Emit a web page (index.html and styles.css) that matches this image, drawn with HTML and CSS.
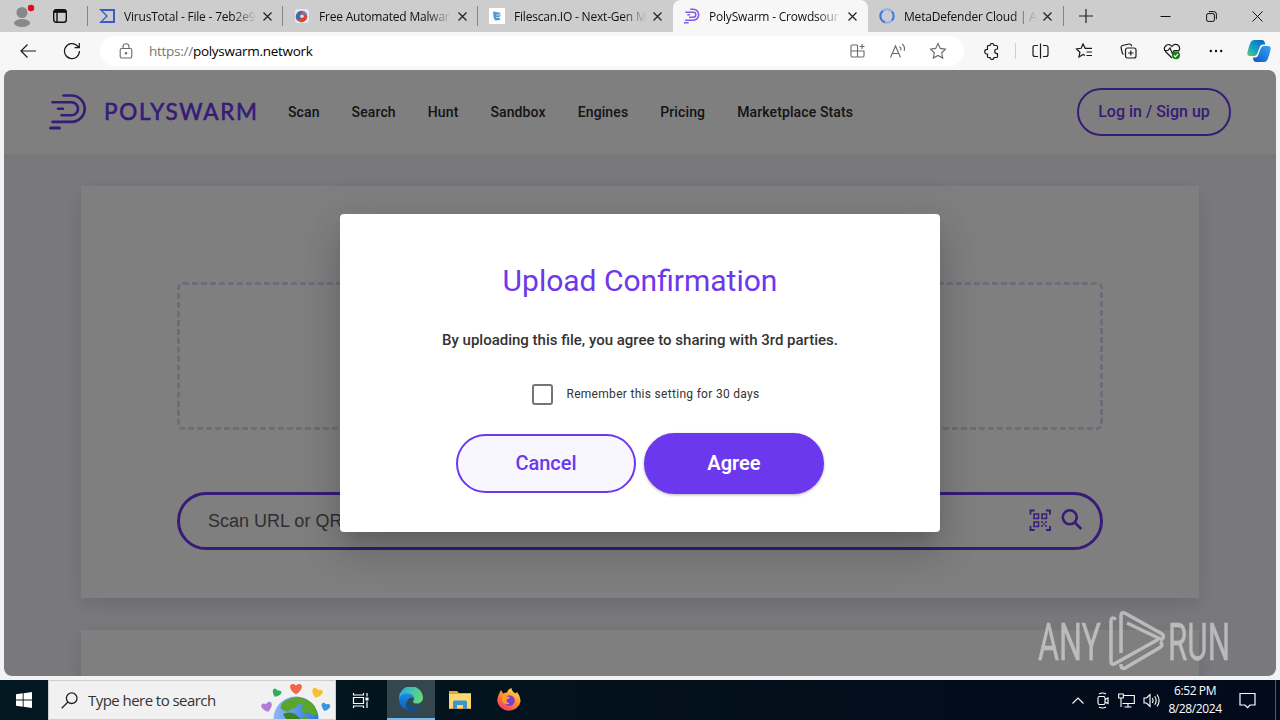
FILE: index.html
```html
<!DOCTYPE html>
<html lang="en">
<head>
    <meta charset="UTF-8">
    <meta name="viewport" content="width=device-width, initial-scale=1.0">
    <title>PolySwarm - Crowdsourced threat detection</title>
    <link rel="stylesheet" href="styles.css">
</head>
<body>

    <!-- Browser tabs -->
    <div class="tab-strip">
        <div class="strip-left">
            <svg width="24" height="24" viewBox="0 0 24 24">
                <circle cx="11" cy="8.500" r="5.500" fill="#888"/>
                <ellipse cx="11" cy="19" rx="8" ry="4" fill="#888"/>
                <circle cx="20" cy="4" r="3.200" fill="#e00b1c"/>
            </svg>
            <svg width="16" height="16" viewBox="0 0 16 16" fill="none" stroke="#111" stroke-width="1.400">
                <rect x="1.700" y="1.700" width="12.600" height="12.600" rx="2.500"/>
                <path d="M1.700 4h12.600M5 4v10" />
                <path d="M2 3h12" stroke-width="2.500"/>
            </svg>
        </div>
        <div class="tab">
            <svg width="16" height="16" viewBox="0 0 16 16"><path d="M0 1h16v14H0l7-7zM3.800 3L9 8l-5.200 5H14V3z" fill="#3b5bc8" fill-rule="evenodd"/></svg>
            <span class="tab-title">VirusTotal - File - 7eb2e9</span>
            <svg class="close" width="9" height="9" viewBox="0 0 9 9"><path d="M.5.5l8 8M8.500.5l-8 8"/></svg>
        </div>
        <div class="tab">
            <svg width="16" height="16" viewBox="0 0 16 16"><rect x="1" y="1" width="14" height="14" rx="3" fill="#dfe9ef"/><circle cx="7.500" cy="8.500" r="5.700" fill="#d9433a"/><path d="M8 3a5.700 5.700 0 0 0-5 9C5 13 5.500 8 8 3z" fill="#2d76b5"/><path d="M8 2.800a5.700 5.700 0 0 1 5 4L9 6z" fill="#3f9ad6"/><circle cx="8" cy="8.300" r="1.800" fill="#cfe3f5"/></svg>
            <span class="tab-title">Free Automated Malwar</span>
            <svg class="close" width="9" height="9" viewBox="0 0 9 9"><path d="M.5.5l8 8M8.500.5l-8 8"/></svg>
        </div>
        <div class="tab">
            <svg width="16" height="16" viewBox="0 0 16 16"><path d="M0 0h16v16H0z" fill="#fff"/><path d="M4 3.500l8 1.500-2 1.500 2 1-2 1.500 1.500 3L6 12.500 4.500 9z" fill="#4a9ad4"/><path d="M7 7h4M7 9.500h3" stroke="#b9dcf2"/></svg>
            <span class="tab-title">Filescan.IO - Next-Gen M</span>
            <svg class="close" width="9" height="9" viewBox="0 0 9 9"><path d="M.5.5l8 8M8.500.5l-8 8"/></svg>
        </div>
        <div class="tab active">
            <svg width="16" height="16" viewBox="0 0 38 36" fill="none" stroke="#8457e6" stroke-width="3.600"><path d="M15 2h7a13 13 0 0 1 0 26H3M3 9h19a6 6 0 0 1 0 12H12M8 15h6M0 34h11"/></svg>
            <span class="tab-title">PolySwarm - Crowdsour</span>
            <svg class="close" width="9" height="9" viewBox="0 0 9 9"><path d="M.5.5l8 8M8.500.5l-8 8"/></svg>
        </div>
        <div class="tab">
            <svg width="16" height="16" viewBox="0 0 16 16" fill="none" stroke-width="2"><circle cx="8" cy="8" r="6.700" stroke="#8fb0ea"/><path d="M4 2.700A6.700 6.700 0 0 0 6 14.400M13 3.700a6.700 6.700 0 0 1 0 8.600" stroke="#3f78dc"/></svg>
            <span class="tab-title">MetaDefender Cloud | A</span>
            <svg class="close" width="9" height="9" viewBox="0 0 9 9"><path d="M.5.5l8 8M8.500.5l-8 8"/></svg>
        </div>
        <div class="new-tab">
            <svg width="14" height="14" viewBox="0 0 14 14" stroke="#222" stroke-width="1.200"><path d="M7 0v14M0 7h14"/></svg>
        </div>
        <div class="window-controls">
            <span><svg width="11" height="11" viewBox="0 0 11 11"><path d="M.5 5.500h10"/></svg></span>
            <span><svg width="11" height="11" viewBox="0 0 11 11"><rect x=".6" y="2.600" width="7.800" height="7.800" rx="1.500"/><path d="M2.800.6h5a2.600 2.600 0 0 1 2.600 2.600v5"/></svg></span>
            <span><svg width="11" height="11" viewBox="0 0 11 11"><path d="M.5.5l10 10M10.500.5l-10 10"/></svg></span>
        </div>
    </div>

    <!-- Toolbar -->
    <div class="toolbar">
        <span class="tool"><svg width="18" height="16" viewBox="0 0 18 16"><path d="M17 8H2M8.500 1.500L2 8l6.500 6.500"/></svg></span>
        <span class="tool"><svg width="18" height="18" viewBox="0 0 18 18"><path d="M16.500 9A7.500 7.500 0 1 1 14 3.500L16 5.500M16.300 1v4.700h-4.700"/></svg></span>
        <div class="address-bar">
            <svg width="14" height="16" viewBox="0 0 14 16"><rect x="1.200" y="5.500" width="11.600" height="9.500" rx="1.500"/><path d="M4 5.500V3.800a3 3 0 0 1 6 0v1.700"/><circle cx="7" cy="10.200" r=".7" fill="#555"/></svg>
            <span class="url"><span class="scheme">https://</span>polyswarm.network</span>
            <span class="address-icon"><svg width="16" height="16" viewBox="0 0 16 16"><path d="M7.500 2H2.200Q1 2 1 3.200v9.600Q1 14 2.200 14h10.600q1.200 0 1.200-1.200V8H1M7.500 2v12M12 1v5M9.500 3.500h5"/></svg></span>
            <span class="address-icon"><svg width="18" height="16" viewBox="0 0 18 16"><path d="M1.500 14.500L6.500 3l5 11.500M3.200 10.500h6.600M10.500 3.500q2 1.500 1.300 3.800M13.200 1q3.200 2.500 2 6.800"/></svg></span>
            <span class="address-icon"><svg width="18" height="18" viewBox="0 0 18 18"><path d="M9 1.500l2.300 4.900 5.200.7-3.800 3.700 1 5.300L9 13.500l-4.700 2.600 1-5.300L1.500 7.100l5.200-.7z"/></svg></span>
        </div>
        <span class="tool"><svg width="17" height="17" viewBox="0 0 17 17"><path d="M5.500 2.500H7a2 2 0 0 1 4 0h2.500q1 0 1 1V6H14a2.300 2.300 0 0 0 0 4.600h.5v2.900q0 1-1 1H11a2 2 0 0 1-4 0H5.500q-1 0-1-1V11H4a2.300 2.300 0 0 1 0-4.600h.5V3.500q0-1 1-1z"/></svg></span>
        <span class="tool-divider"></span>
        <span class="tool"><svg width="17" height="16" viewBox="0 0 17 16"><path d="M6 2.500H3Q1 2.500 1 4.500v7q0 2 2 2h3M11 2.500h3q2 0 2 2v7q0 2-2 2h-3M8.500.5v15"/></svg></span>
        <span class="tool"><svg width="18" height="16" viewBox="0 0 18 16"><path d="M10 12.500l-2-1L4 14l.9-4.800L1.500 6l4.700-.7L8 1l2.200 4.300H17M11.500 9H17M11.500 12.500H17"/></svg></span>
        <span class="tool"><svg width="17" height="16" viewBox="0 0 17 16"><rect x="5.500" y="5" width="10.500" height="10" rx="2"/><path d="M10.800 7.500v5M8.200 10h5.200M3.500 11.500Q2.500 11 2 9L1 4.500Q1 3 2.500 2.500L9 1q2-.2 2.500 1.500l.2.700"/></svg></span>
        <span class="tool"><svg width="18" height="17" viewBox="0 0 18 17"><path d="M9 15L2.500 8.500C-1 4 5.500-1.500 9 3.500c3.500-5 10-.5 6.500 5M1 7.500h4L7 5l2.500 6L11 7.500h5"/><circle cx="13" cy="12.300" r="4" fill="#14801c" stroke="none"/><path d="M11 12.400l1.400 1.400 2.600-2.900" stroke="#fff"/></svg></span>
        <span class="tool"><svg width="14" height="4" viewBox="0 0 14 4"><g fill="#111" stroke="none"><circle cx="1.800" cy="2" r="1.200"/><circle cx="7" cy="2" r="1.200"/><circle cx="12.200" cy="2" r="1.200"/></g></svg></span>
        <span class="tool copilot">
            <svg width="24" height="22" viewBox="0 0 24 22">
                <defs>
                    <linearGradient id="cp1" x1="0" y1="1" x2="1" y2="0"><stop offset="0" stop-color="#63c96b"/><stop offset=".4" stop-color="#12a5c8"/><stop offset="1" stop-color="#0a5fc0"/></linearGradient>
                    <linearGradient id="cp2" x1="0" y1="1" x2="1" y2="0"><stop offset="0" stop-color="#0d57c7"/><stop offset="1" stop-color="#38a3f2"/></linearGradient>
                </defs>
                <path d="M7 0h8q2 0 2.600 2l.6 2.500h-2.700q-2 0-2.800 2.500L10.500 13Q9.500 16 7 16H3q-3 0-2.700-3Q1.500 7 3.500 2.500 4.500 0 7 0z" fill="url(#cp1)"/>
                <path d="M17 22H9q-2 0-2.600-2l-.6-2.500h2.700q2 0 2.800-2.500l2.200-6Q14.500 6 17 6h4q3 0 2.700 3-1.200 6-3.200 10.500-1 2.500-3.500 2.500z" fill="url(#cp2)"/>
            </svg>
        </span>
    </div>

    <!-- Page -->
    <div class="viewport">
        <header>
            <svg class="logo" width="208" height="36" viewBox="0 0 208 36">
                <path d="M14.500 1.500H22.500a13.200 13.200 0 0 1 0 26.400H3.500M3.500 8.200h19a6.500 6.500 0 0 1 0 13H12.500M9 14.700h5" fill="none" stroke="#6c38ed" stroke-width="2.600" stroke-linecap="round"/>
                <path d="M1.500 34h9" stroke="#6c38ed" stroke-width="3" stroke-linecap="round"/>
                <text x="55" y="26" textLength="153">POLYSWARM</text>
            </svg>
            <nav>
                <a>Scan</a>
                <a>Search</a>
                <a>Hunt</a>
                <a>Sandbox</a>
                <a>Engines</a>
                <a>Pricing</a>
                <a>Marketplace Stats</a>
            </nav>
            <button class="login">Log in / Sign up</button>
        </header>
        <main>
            <section class="card">
                <div class="dropzone"></div>
                <div class="search-box">
                    <span>Scan URL or QR Code</span>
                    <svg width="22" height="22" viewBox="0 0 22 22" fill="none" stroke="#6c38ed" stroke-width="1.500">
                        <path d="M1.500 5.500v-4h4M17 1.500h4v4M1.500 17v4h4M17 21h4v-4" stroke-width="1.800"/>
                        <path d="M5 5h4.500v4.500H5zM13 5h4.500v4.500H13zM5 13h4.500v4.500H5z"/>
                        <path d="M12 13h2M16 13h2M14 15h2M12 17h2M16 17h2"/>
                    </svg>
                    <svg width="22" height="22" viewBox="0 0 22 22" fill="none" stroke="#6c38ed" stroke-width="2.600"><circle cx="8.800" cy="8.300" r="7"/><path d="M13.800 13.500l6.500 6.500"/></svg>
                </div>
            </section>
            <section class="card"></section>
        </main>

        <div class="overlay">
            <div class="modal">
                <h1>Upload Confirmation</h1>
                <p>By uploading this file, you agree to sharing with 3rd parties.</p>
                <label><span class="checkbox"></span>Remember this setting for 30 days</label>
                <div class="actions">
                    <button class="cancel">Cancel</button>
                    <button class="agree">Agree</button>
                </div>
            </div>
        </div>

        <svg class="watermark" width="194" height="62" viewBox="0 0 194 62">
            <text x="1" y="49.500" textLength="63" lengthAdjust="spacingAndGlyphs">ANY</text>
            <text x="131" y="49.500" textLength="62" lengthAdjust="spacingAndGlyphs">RUN</text>
            <path d="M79 9.500q-5-4-5 2v40q0 4 4 2l43-24M84 43V6q0-5 4.500-2.500l36 20q4 3 0 6L90 13M84 54v2q1 4 5 1.500l34-20q4-3 0-5.500"/>
        </svg>
    </div>

    <!-- Windows taskbar -->
    <div class="taskbar">
        <span class="start"><svg width="16" height="16" viewBox="0 0 16 16" fill="#fff"><path d="M0 2.300l6.700-1v6.200H0zM7.600 1.200L16 0v7.500H7.600zM0 8.500h6.700v6.200l-6.700-1zM7.600 8.500H16V16l-8.400-1.200z"/></svg></span>
        <div class="taskbar-search">
            <svg width="17" height="17" viewBox="0 0 17 17" fill="none" stroke="#222" stroke-width="1.300"><circle cx="10.700" cy="6.200" r="5.300"/><path d="M7 10L.7 16.300"/></svg>
            <span>Type here to search</span>
            <svg class="earth" width="70" height="38" viewBox="0 0 70 38">
                <defs>
                    <linearGradient id="sea"><stop offset="0" stop-color="#8fb8f5"/><stop offset="1" stop-color="#2a78dc"/></linearGradient>
                    <path id="heart" d="M0 5.500C-10-1-5.500-8 0-3.500 5.500-8 10-1 0 5.500z"/>
                </defs>
                <circle cx="35" cy="38" r="22.500" fill="url(#sea)"/>
                <path d="M24 20q10-6 20-2 8 3 11 10l1 6-5 1-3-4-5 2-3-5 3-4-6-1-2 4-5 1q-2 4-6 2l-4-2q-1-5 4-8z" fill="#5aa52c"/>
                <path d="M22 33q7-3 12 0l6 5H25z" fill="#3b8420"/>
                <path d="M41 38l2-3 5 3z" fill="#5aa52c"/>
                <use href="#heart" x="35" y="8" fill="#f2674a"/>
                <use href="#heart" transform="translate(15.500 12) rotate(25) scale(.75)" fill="#2fae62"/>
                <use href="#heart" transform="translate(56 12) rotate(20) scale(.9)" fill="#f8bf35"/>
                <use href="#heart" transform="translate(6 26) rotate(-15) scale(.9)" fill="#b07ed6"/>
                <use href="#heart" transform="translate(64.500 26) rotate(15) scale(.75)" fill="#3a94de"/>
            </svg>
        </div>
        <span class="app taskview"><svg width="18" height="17" viewBox="0 0 18 17" fill="none" stroke="#fff" stroke-width="1.200"><path d="M1.500 1v2h10V1M1.500 16v-2h10v2M1.500 5.500h10v6h-10zM15 1v3.500M15 9.500V16"/><path d="M13.500 5.500h3v3h-3z" fill="#fff" stroke="none"/></svg></span>
        <span class="app open">
            <svg width="24" height="24" viewBox="0 0 24 24">
                <defs>
                    <linearGradient id="edge1" x1="0" y1=".3" x2="1" y2=".5"><stop offset="0" stop-color="#2ba7e4"/><stop offset="1" stop-color="#62db75"/></linearGradient>
                    <linearGradient id="edge2" x1="0" y1="0" x2="0" y2="1"><stop offset="0" stop-color="#1b8ee0"/><stop offset="1" stop-color="#0d5bb5"/></linearGradient>
                </defs>
                <path d="M0 12a12 12 0 0 1 24-1.500c0 4-3 6-6 6-4 0-4.500-1.600-3.500-3 1.500-3-1-6-5-6-4 0-8 2-9.500 4.500z" fill="url(#edge1)"/>
                <path d="M0 12c1-4 5-5.500 8.500-5.500 4 0 6.500 3 6.500 5-3-2-7 0-6.500 4 .5 5 7 6.500 13 3.500A12 12 0 0 1 0 12z" fill="url(#edge2)"/>
                <path d="M9 13c-2 5 3 9 12.500 6C19 23 15 24 12 24 7 22.500 5 17 9 13z" fill="#124d90"/>
            </svg>
        </span>
        <span class="app"><svg width="22" height="20" viewBox="0 0 22 20"><path d="M0 1h8l2 2h12v16H0z" fill="#e9a721"/><path d="M0 4h22v14H0z" fill="#fcd872"/><path d="M4 12q0-1.500 1.500-1.500h11Q18 10.500 18 12v7h-4v-4H8v4H4z" fill="#3f94cf"/></svg></span>
        <span class="app">
            <svg width="24" height="24" viewBox="0 0 24 24">
                <defs><linearGradient id="fox" x1=".8" y1="0" x2=".2" y2="1"><stop offset="0" stop-color="#ffe14a"/><stop offset=".5" stop-color="#ff8a2a"/><stop offset="1" stop-color="#f0306e"/></linearGradient></defs>
                <path d="M2 6l2-4 2 3.500q2-1 4-1Q11 1 14.500 0q0 3 4 5.500L20 4q4 5 3.500 9.500a11.700 10.500 0 0 1-23.300-1Q.3 9 2 6z" fill="url(#fox)"/>
                <circle cx="12.500" cy="12.500" r="5.200" fill="#7a3fd0"/>
                <path d="M5 7q3-1 5 1.500l3 .5q-1 2-3.500 2.500Q9 15 13 15.500q-6 2-8-3z" fill="#ff9a2e"/>
            </svg>
        </span>
        <div class="tray">
            <svg class="chevron" width="12" height="7" viewBox="0 0 12 7"><path d="M.5 6.500L6 1l5.500 5.500"/></svg>
            <svg width="14" height="17" viewBox="0 0 14 17"><rect x="2" y="4.500" width="7" height="8" rx="1.500"/><path d="M9 7.500l3-1.500v5.500L9 10M3 2q3.500-2 7 0M3 15q3.500 2 7 0"/></svg>
            <svg width="17" height="15" viewBox="0 0 17 15"><path d="M5.500 2.500h10.800v8H4.500M10 10.500v3.500M6.500 14h7M.7 1h4.600v4H.7zM3 5v9"/></svg>
            <svg width="17" height="15" viewBox="0 0 17 15"><path d="M1 5h2.500L7 1.500v12L3.500 10H1zM9.300 5q1.500 2.500 0 5M11.700 3.300q3 4.200 0 8.400M14 1.500q4.200 6 0 12"/></svg>
        </div>
        <div class="clock">
            <span>6:52 PM</span>
            <span>8/28/2024</span>
        </div>
        <span class="notifications"><svg width="17" height="17" viewBox="0 0 17 17" fill="none" stroke="#fff" stroke-width="1.200"><path d="M1 1.500h15v11.500h-5L8.500 15.700 6 13H1z"/></svg></span>
    </div>

</body>
</html>
```

FILE: styles.css
```css
* {
    box-sizing: border-box;
}

body {
    margin: 0;
    width: 1280px;
    height: 720px;
    overflow: hidden;
    display: flex;
    flex-direction: column;
    font-family: Roboto, sans-serif;
    background-color: #f3f3f4;
}

svg {
    flex-shrink: 0;
}

/* Browser tabs */
.tab-strip {
    display: flex;
    height: 32px;
    background-color: #cdcdcd;
    font-family: "Open Sans", sans-serif;
    font-size: 12px;
    color: #111;
}

.strip-left {
    width: 88px;
    display: flex;
    align-items: center;
    gap: 17px;
    padding-left: 11px;
}

.tab {
    position: relative;
    width: 195px;
    display: flex;
    align-items: center;
    padding-left: 11px;
}

.tab:not(.active)::before {
    content: "";
    position: absolute;
    left: -1px;
    top: 6px;
    width: 1px;
    height: 20px;
    background-color: #858585;
}

.tab.active + .tab::before {
    display: none;
}

.tab.active {
    background: #f7f7f7;
    border-radius: 8px 8px 0 0;
}

.tab-title {
    width: 133px;
    margin: 0 6px 0 9px;
    white-space: nowrap;
    letter-spacing: -0.2px;
    -webkit-mask-image: linear-gradient(90deg, #000 108px, transparent 133px);
    mask-image: linear-gradient(90deg, #000 108px, transparent 133px);
}

.close {
    fill: none;
    stroke: #222;
    stroke-width: 1.2;
}

.new-tab {
    width: 44px;
    display: flex;
    align-items: center;
    justify-content: center;
    border-left: 1px solid #858585;
    height: 20px;
    margin-top: 6px;
}

.window-controls {
    display: flex;
    margin-left: auto;
}

.window-controls span {
    width: 46px;
    display: flex;
    align-items: center;
    justify-content: center;
}

.window-controls svg {
    fill: none;
    stroke: #111;
}

/* Toolbar */
.toolbar {
    display: flex;
    align-items: center;
    height: 38px;
    padding-left: 6px;
    background-color: #f7f7f7;
}

.tool {
    width: 44px;
    display: flex;
    align-items: center;
    justify-content: center;
}

.tool svg {
    fill: none;
    stroke: #1b1b1b;
    stroke-width: 1.2;
}

.tool.copilot {
    width: 42px;
}

.tool.copilot svg {
    stroke: none;
}

.tool-divider {
    width: 1px;
    height: 16px;
    margin: 0 2px;
    background-color: #cfcfcf;
}

.address-bar {
    width: 864px;
    height: 30px;
    margin: 0 5px 0 6px;
    padding: 0 6px 0 19px;
    display: flex;
    align-items: center;
    border-radius: 15px;
    background-color: #fff;
}

.address-bar svg {
    fill: none;
    stroke: #6a6a6a;
    stroke-width: 1.1;
}

.url {
    flex: 1;
    margin-left: 16px;
    font-family: "Open Sans", sans-serif;
    font-size: 13.5px;
    letter-spacing: -0.27px;
    color: #000;
}

.scheme {
    color: #767676;
}

.address-icon {
    width: 40px;
    display: flex;
    align-items: center;
    justify-content: center;
}

/* Page */
.viewport {
    position: relative;
    height: 606px;
    margin: 0 4px 4px;
    overflow: hidden;
    border-radius: 8px;
    background-color: #f3f2fa;
}

header {
    display: flex;
    align-items: center;
    height: 84px;
    padding: 0 45px;
    background-color: #fff;
}

.logo text {
    font-family: Lato, sans-serif;
    font-size: 22.5px;
    font-weight: 400;
    fill: #6c38ed;
    stroke: #6c38ed;
    stroke-width: 0.6;
}

nav {
    display: flex;
    gap: 32px;
    margin-left: 31px;
    font-size: 14px;
    font-weight: 500;
    letter-spacing: 0.12px;
    color: #2a2a2e;
}

button {
    font-family: Roboto, sans-serif;
    font-weight: 500;
    color: #6c38ed;
    background-color: transparent;
    border: 2px solid #6c38ed;
    border-radius: 32px;
    white-space: nowrap;
}

.login {
    width: 154px;
    height: 48px;
    margin-left: auto;
    padding: 0 0 2px;
    font-size: 16px;
}

.card {
    height: 412px;
    margin: 32px 77px;
    padding: 96px;
    background-color: #fff;
    box-shadow: 0 6px 18px rgba(0, 0, 0, 0.12);
}

.dropzone {
    height: 148px;
    border: 3px dashed #dcd9f0;
    border-radius: 6px;
}

.search-box {
    display: flex;
    align-items: center;
    gap: 10px;
    height: 58px;
    margin-top: 62px;
    padding: 0 17px 0 28px;
    border: 3px solid #6c38ed;
    border-radius: 29px;
    font-family: "Liberation Sans", sans-serif;
    font-size: 18px;
    color: #5d5d66;
}

.search-box span {
    flex: 1;
}

.search-box svg {
    margin-bottom: 2px;
}

/* Confirmation dialog */
.overlay {
    position: absolute;
    inset: 0;
    display: flex;
    justify-content: center;
    align-items: center;
    background-color: rgba(0, 0, 0, 0.5);
}

.modal {
    display: flex;
    flex-direction: column;
    align-items: center;
    width: 600px;
    height: 318px;
    padding-top: 49px;
    border-radius: 4px;
    background-color: #fff;
    box-shadow: 0 11px 15px -7px rgba(0, 0, 0, 0.15), 0 24px 38px 3px rgba(0, 0, 0, 0.1), 0 9px 46px 8px rgba(0, 0, 0, 0.08);
}

.modal h1 {
    margin: 0;
    font-size: 30px;
    font-weight: 400;
    line-height: 36px;
    color: #6c38ed;
}

.modal p {
    margin: 30px 0 0;
    font-size: 15px;
    font-weight: 500;
    line-height: 22px;
    color: #333;
}

.modal label {
    display: flex;
    align-items: center;
    height: 22px;
    margin: 32px 0 28px 12px;
    font-size: 12px;
    line-height: 24px;
    letter-spacing: 0.3px;
    color: #333;
}

.checkbox {
    width: 21px;
    height: 21px;
    margin-right: 13px;
    border: 2px solid #757575;
    border-radius: 3px;
}

.actions {
    display: flex;
    align-items: center;
    gap: 8px;
}

.actions button {
    width: 180px;
    height: 59px;
    padding-bottom: 3px;
    font-size: 20px;
}

.actions .cancel {
    background-color: #f8f6ff;
}

.actions .agree {
    height: 61px;
    font-weight: 600;
    color: #fff;
    background-color: #6c38ed;
    box-shadow: 0 1px 3px rgba(0, 0, 0, 0.3);
}

.watermark {
    position: absolute;
    right: 45px;
    bottom: 4px;
    opacity: 0.6;
}

.watermark text {
    font-family: Roboto, sans-serif;
    font-size: 52px;
    font-weight: 400;
    fill: #e6e6e6;
    stroke: #e6e6e6;
    stroke-width: 0.4;
}

.watermark path {
    fill: none;
    stroke: #e6e6e6;
    stroke-width: 3.5;
    stroke-linejoin: round;
}

/* Windows taskbar */
.taskbar {
    display: flex;
    height: 40px;
    color: #fff;
    background: linear-gradient(90deg, #021821, #03111c 50%, #020a1b);
    font-family: "Open Sans", sans-serif;
}

.start,
.app {
    width: 49px;
    display: flex;
    align-items: center;
    justify-content: center;
}

.start {
    width: 48px;
}

.taskbar-search {
    display: flex;
    align-items: center;
    width: 288px;
    padding-left: 12px;
    border: 1px solid #cfcfcf;
    background-color: #f1f1f1;
    font-size: 15px;
    color: #333;
}

.taskbar-search span {
    margin-left: 10px;
    letter-spacing: -0.55px;
}

.earth {
    margin-left: auto;
    margin-right: 4px;
}

.app.taskview {
    width: 50px;
}

.app.open {
    width: 48px;
    margin-left: 1px;
    background-color: #34474f;
    border-bottom: 2px solid #76b9ed;
}

.tray {
    display: flex;
    align-items: center;
    gap: 8px;
    margin-left: auto;
}

.tray svg {
    fill: none;
    stroke: #fff;
    stroke-width: 1.1;
}

.tray .chevron {
    margin-right: 4px;
}

.clock {
    width: 70px;
    display: flex;
    flex-direction: column;
    justify-content: center;
    align-items: center;
    font-size: 12px;
    line-height: 18px;
    letter-spacing: -0.4px;
}

.notifications {
    width: 46px;
    margin-right: 4px;
    padding-left: 9px;
    display: flex;
    align-items: center;
    border-right: 1px solid #555e68;
}
```
